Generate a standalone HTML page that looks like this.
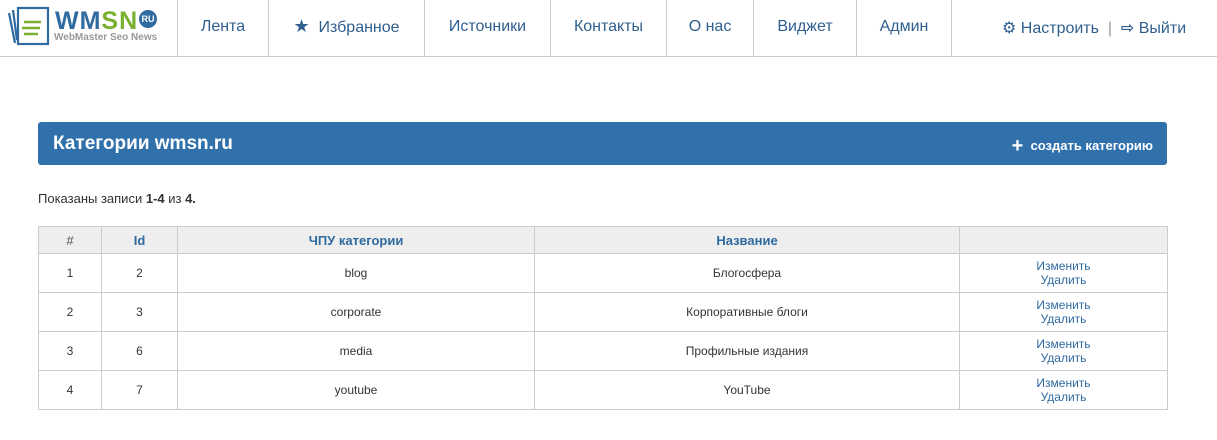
<!DOCTYPE html>
<html><head><meta charset="utf-8"><style>
*{margin:0;padding:0;box-sizing:border-box}
body{width:1217px;height:440px;background:#fff;font-family:"Liberation Sans","DejaVu Sans",sans-serif;position:relative;overflow:hidden}
.hdr{position:absolute;left:0;top:0;width:1217px;height:57px;border-bottom:1px solid #ccc}
.nav{position:absolute;top:0;height:56px;border-left:1px solid #ccc;color:#2f5f8f;font-size:16px;line-height:53px;text-align:center}
.bar{position:absolute;left:38px;top:122px;width:1129px;height:43px;background:#3070ab;border-radius:3px;color:#fff}
table{position:absolute;left:38px;top:226px;width:1130px;border-collapse:collapse;font-size:12px;color:#333;font-family:"Liberation Sans",sans-serif}
td,th{border:1px solid #ccc;text-align:center}
th{background:#eee;height:27px;color:#2f6aa0;font-weight:bold;font-size:13px}
th:first-child{color:#555;font-weight:normal}
td{height:39px;line-height:14px}
a{color:#2f6aa0;text-decoration:none}
</style></head><body>
<div class="hdr">
<svg style="position:absolute;left:6px;top:5px" width="44" height="42" viewBox="0 0 44 42"><g fill="none" stroke="#2f6aa0" stroke-width="2.2"><path d="M3 8l6 30M7 5l4 30"/><rect x="12" y="3" width="30" height="36"/></g><g stroke="#7ab030" stroke-width="2.5"><path d="M18 17h17M16 23h18M18 29h14"/></g></svg>
<div style="position:absolute;left:55px;top:7px;font:bold 25px 'Liberation Sans',sans-serif;letter-spacing:1px;color:#2f6aa0">WM<span style="color:#7ab030">SN</span></div>
<div style="position:absolute;left:139px;top:10px;width:18px;height:18px;border-radius:50%;background:#2f6aa0;color:#fff;font:bold 9px sans-serif;line-height:18px;text-align:center">RU</div>
<div style="position:absolute;left:54px;top:32px;font:bold 10px 'Liberation Sans',sans-serif;color:#999">WebMaster Seo News</div>
<div class="nav" style="left:177px;width:91px">Лента</div>
<div class="nav" style="left:268px;width:156px"><span style="font-size:18px">★</span>&nbsp;&nbsp;Избранное</div>
<div class="nav" style="left:424px;width:126px">Источники</div>
<div class="nav" style="left:550px;width:116px">Контакты</div>
<div class="nav" style="left:666px;width:87px">О нас</div>
<div class="nav" style="left:753px;width:103px">Виджет</div>
<div class="nav" style="left:856px;width:95px">Админ</div>
<div class="nav" style="left:951px;width:266px;border-left:1px solid #ccc;line-height:58px;text-align:left;padding-left:50px">⚙ Настроить &nbsp;<span style="color:#999">|</span>&nbsp; <b>⇨</b> Выйти</div>
</div>
<div class="bar"><span style="position:absolute;left:15px;top:11px;font-size:19px;font-weight:bold">Категории wmsn.ru</span><span style="position:absolute;right:14px;top:13px;font-size:13px;font-weight:bold"><b style="font-size:20px;vertical-align:-2px">+</b>&nbsp; создать категорию</span></div>
<div style="position:absolute;left:38px;top:191px;font-size:13px;color:#333">Показаны записи <b>1-4</b> из <b>4.</b></div>
<table>
<tr><th style="width:63px">#</th><th style="width:76px">Id</th><th style="width:357px">ЧПУ категории</th><th style="width:425px">Название</th><th></th></tr>
<tr><td>1</td><td>2</td><td>blog</td><td>Блогосфера</td><td><a>Изменить</a><br><a>Удалить</a></td></tr>
<tr><td>2</td><td>3</td><td>corporate</td><td>Корпоративные блоги</td><td><a>Изменить</a><br><a>Удалить</a></td></tr>
<tr><td>3</td><td>6</td><td>media</td><td>Профильные издания</td><td><a>Изменить</a><br><a>Удалить</a></td></tr>
<tr><td>4</td><td>7</td><td>youtube</td><td>YouTube</td><td><a>Изменить</a><br><a>Удалить</a></td></tr>
</table>
</body></html>
